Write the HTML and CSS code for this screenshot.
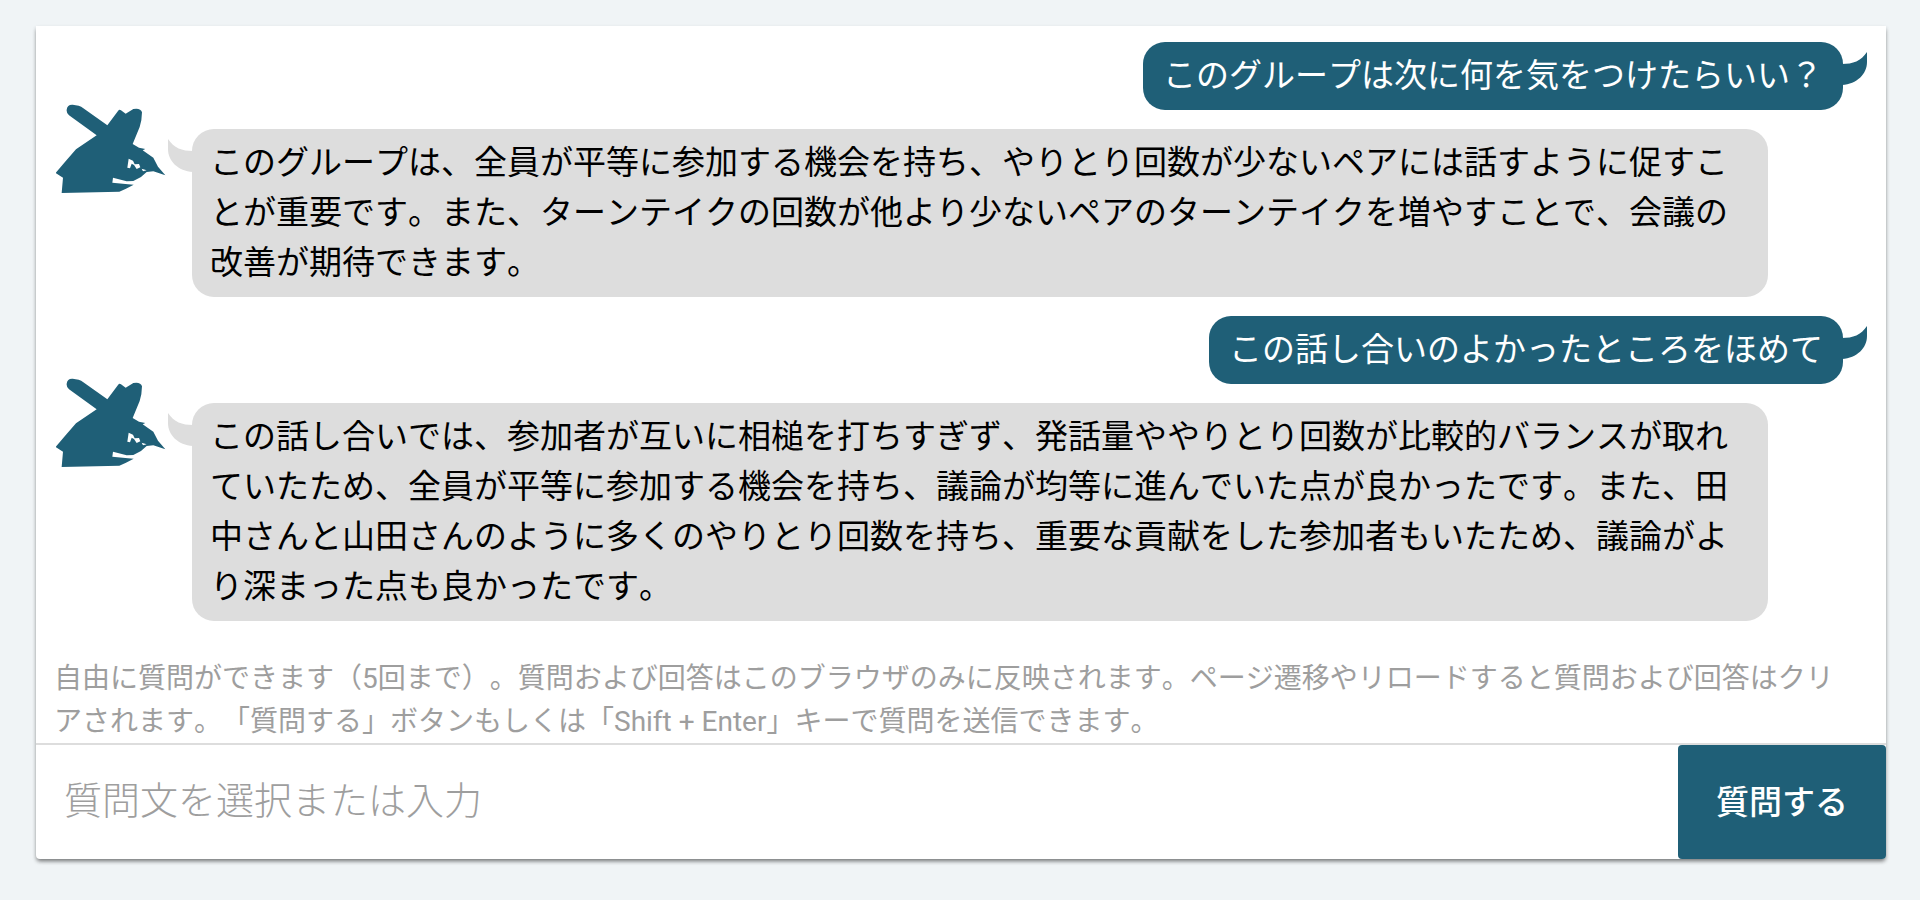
FILE: index.html
```
<!DOCTYPE html>
<html lang="ja">
<head>
<meta charset="utf-8">
<title>質問チャット</title>
<link rel="stylesheet" href="styles.css">
</head>
<body>
<svg class="defs" aria-hidden="true">
  <symbol id="fox" viewBox="80 43 330 270">
    <path fill="currentColor" fill-rule="evenodd" d="M112 60 Q114 44 130 45 L148 48 Q156 50 162 56 L234 107 L266 64 Q270 58 275 62 L289 72 L312 58 Q334 54 338 68 L336 92 L331 112 L310 163 L329 174 L348 178 L340 182 L372 204 L386 231 L408 257 L372 245 L352 247 L335 262 L312 274 L292 275 L251 264 L249 279 L296 284 L313 285 L290 297 L270 306 L97 310 L101 264 L79 250 L110 213 L140 179 L202 137 L119 77 Q111 70 112 60Z M298 207 L311 213 L316 224 L329 223 L333 233 L322 238 L314 226 L307 222 L302 236 L294 234Z M337 237 L352 242 L341 245Z"/>
  </symbol>
  <symbol id="tail" viewBox="0 0 25 33">
    <path fill="currentColor" d="M0 0 C6 9 14 12 25 12 V33 C10 32 0 22 0 10Z"/>
  </symbol>
</svg>
<main class="card">
  <section class="thread">
    <div class="row row-user">
      <p class="bubble bubble-user">このグループは次に何を気をつけたらいい？<svg class="tail tail-user"><use href="#tail"/></svg></p>
    </div>
    <div class="row">
      <svg class="avatar"><use href="#fox"/></svg>
      <p class="bubble bubble-bot">このグループは、全員が平等に参加する機会を持ち、やりとり回数が少ないペアには話すように促すことが重要です。また、ターンテイクの回数が他より少ないペアのターンテイクを増やすことで、会議の改善が期待できます。<svg class="tail tail-bot"><use href="#tail"/></svg></p>
    </div>
    <div class="row row-user">
      <p class="bubble bubble-user">この話し合いのよかったところをほめて<svg class="tail tail-user"><use href="#tail"/></svg></p>
    </div>
    <div class="row">
      <svg class="avatar"><use href="#fox"/></svg>
      <p class="bubble bubble-bot">この話し合いでは、参加者が互いに相槌を打ちすぎず、発話量ややりとり回数が比較的バランスが取れていたため、全員が平等に参加する機会を持ち、議論が均等に進んでいた点が良かったです。また、田中さんと山田さんのように多くのやりとり回数を持ち、重要な貢献をした参加者もいたため、議論がより深まった点も良かったです。<svg class="tail tail-bot"><use href="#tail"/></svg></p>
    </div>
  </section>
  <p class="note" id="note">自由に質問ができます（5回まで）。質問および回答はこのブラウザのみに反映されます。ページ遷移やリロードすると質問および回答はクリアされます。「質問する」ボタンもしくは「Shift + Enter」キーで質問を送信できます。</p>
  <form class="ask">
    <input class="ask-input" type="text" placeholder="質問文を選択または入力" aria-label="質問文" aria-describedby="note">
    <button class="ask-button" type="button">質問する</button>
  </form>
</main>
</body>
</html>
```
FILE: styles.css
```
* {
  box-sizing: border-box;
}

body {
  margin: 0;
  padding: 26px 34px 40px 36px;
  background: #f0f4f6;
  color: #000;
  font-family: Roboto, "Noto Sans CJK JP", sans-serif;
  font-kerning: none;
  text-spacing-trim: space-all;
}

.defs {
  position: absolute;
  width: 0;
  height: 0;
}

.card {
  background: #fff;
  border-radius: 0 0 4px 4px;
  box-shadow: 0 3px 4px -1px rgba(0, 0, 0, 0.45), 0 2px 4px rgba(0, 0, 0, 0.15);
}

.thread {
  display: flex;
  flex-direction: column;
  gap: 19px;
  padding: 16px 43px 36px 20px;
}

.row {
  display: flex;
  align-items: flex-start;
  gap: 26px;
  padding-right: 75px;
}

.row-user {
  justify-content: flex-end;
  padding-right: 0;
}

.avatar {
  flex: none;
  width: 110px;
  height: 90px;
  margin-top: -25px;
  color: #1f5f77;
}

.bubble {
  position: relative;
  margin: 0;
  padding: 9px 20px;
  border-radius: 22px;
  font-size: 33px;
  line-height: 50px;
}

.bubble-user {
  background: #1f5f77;
  color: #fff;
}

.bubble-bot {
  flex: 1;
  padding-left: 18px;
  background: #ddd;
}

.tail {
  position: absolute;
  top: 10px;
  width: 25px;
  height: 33px;
}

.tail-bot {
  left: -24px;
  color: #ddd;
}

.tail-user {
  right: -24px;
  color: #1f5f77;
  transform: scaleX(-1);
}

.note {
  margin: 0;
  padding: 0 28px 0 18px;
  color: #9e9e9e;
  font-size: 28px;
  line-height: 43px;
}

.ask {
  display: flex;
  border-top: 2px solid #ddd;
}

.ask-input {
  flex: 1;
  min-width: 0;
  padding: 0 28px 2px;
  border: 0;
  background: transparent;
  color: #000;
  font: 300 38px Roboto, "Noto Sans CJK JP", sans-serif;
}

.ask-input::placeholder {
  color: #9e9e9e;
  opacity: 1;
}

.ask-button {
  padding: 33px 38px 31px;
  border: 0;
  border-radius: 4px;
  background: #1f5f77;
  color: #fff;
  font: 500 33px/50px Roboto, "Noto Sans CJK JP", sans-serif;
}
```
